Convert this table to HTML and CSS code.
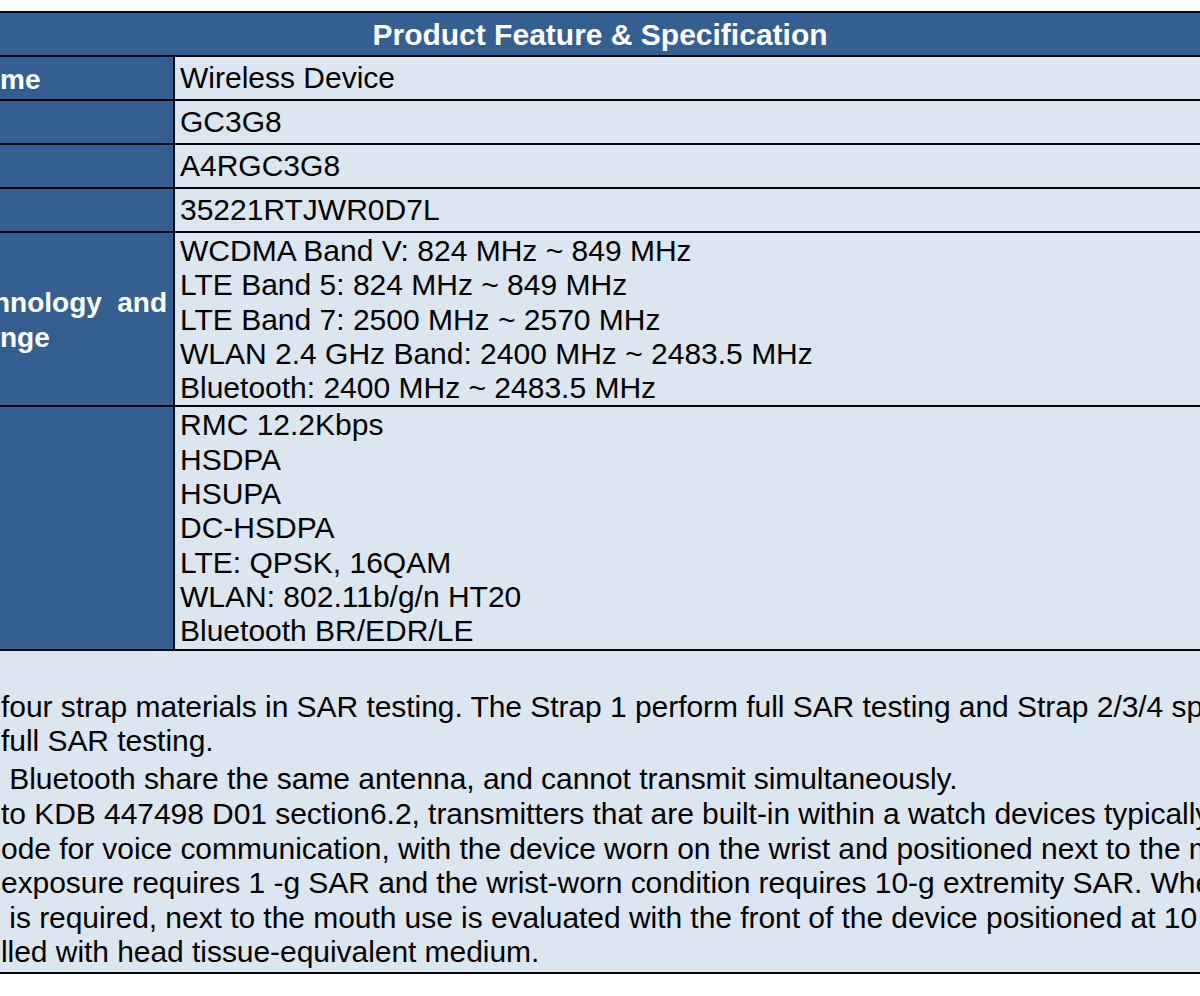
FILE: index.html
```html
<!DOCTYPE html>
<html lang="en">
<head>
<meta charset="utf-8">
<title>Product Feature &amp; Specification</title>
<link rel="stylesheet" href="styles.css">
</head>
<body>
<div class="sheet">
  <div class="title">Product Feature &amp; Specification</div>
  <div class="row">
    <div class="label"><span class="frag">me</span></div>
    <div class="value">Wireless Device</div>
  </div>
  <div class="row">
    <div class="label"></div>
    <div class="value">GC3G8</div>
  </div>
  <div class="row">
    <div class="label"></div>
    <div class="value">A4RGC3G8</div>
  </div>
  <div class="row">
    <div class="label"></div>
    <div class="value">35221RTJWR0D7L</div>
  </div>
  <div class="row">
    <div class="label">
      <div class="label-lines">
        <div class="just"><span class="clip-h">hnology</span><span>and</span></div>
        <span class="frag">nge</span>
      </div>
    </div>
    <div class="value multi">
      <span>WCDMA Band V: 824 MHz ~ 849 MHz</span>
      <span>LTE Band 5: 824 MHz ~ 849 MHz</span>
      <span>LTE Band 7: 2500 MHz ~ 2570 MHz</span>
      <span>WLAN 2.4 GHz Band: 2400 MHz ~ 2483.5 MHz</span>
      <span>Bluetooth: 2400 MHz ~ 2483.5 MHz</span>
    </div>
  </div>
  <div class="row">
    <div class="label"></div>
    <div class="value multi">
      <span>RMC 12.2Kbps</span>
      <span>HSDPA</span>
      <span>HSUPA</span>
      <span>DC-HSDPA</span>
      <span>LTE: QPSK, 16QAM</span>
      <span>WLAN: 802.11b/g/n HT20</span>
      <span>Bluetooth BR/EDR/LE</span>
    </div>
  </div>
  <div class="notes">
    <p class="note">four strap materials in SAR testing. The Strap 1 perform full SAR testing and Strap 2/3/4 spot check
full SAR testing.</p>
    <p class="note note-2"> Bluetooth share the same antenna, and cannot transmit simultaneously.</p>
    <p class="note note-3">to KDB 447498 D01 section6.2, transmitters that are built-in within a watch devices typically
ode for voice communication, with the device worn on the wrist and positioned next to the mouth
exposure requires 1 -g SAR and the wrist-worn condition requires 10-g extremity SAR. When
 is required, next to the mouth use is evaluated with the front of the device positioned at 10 mm
lled with head tissue-equivalent medium.</p>
  </div>
</div>
</body>
</html>
```

FILE: styles.css
```css
html, body {
  margin: 0;
  padding: 0;
  background: #ffffff;
  overflow: hidden;
}

body {
  width: 1200px;
  height: 996px;
  font-family: "Liberation Sans", Arial, sans-serif;
  font-size: 30px;
  line-height: 34.5px;
  color: #000000;
}

.sheet {
  margin-top: 11px;
  width: 1200px;
  border-top: 2px solid #05050f;
}

.title {
  height: 42px;
  line-height: 44px;
  background: #365f91;
  color: #ffffff;
  font-weight: bold;
  text-align: center;
  border-bottom: 2px solid #05050f;
  white-space: nowrap;
}

.row {
  display: flex;
  border-bottom: 2px solid #05050f;
  min-height: 42px;
}

.label {
  width: 175px;
  flex: none;
  background: #365f91;
  border-right: 2px solid #05050f;
  color: #ffffff;
  font-weight: bold;
  font-size: 28px;
  line-height: 35px;
  display: flex;
  align-items: center;
  overflow: hidden;
  white-space: nowrap;
  padding-top: 2px;
  box-sizing: border-box;
}

.label-lines {
  display: flex;
  flex-direction: column;
  width: 100%;
  padding-right: 6px;
  box-sizing: border-box;
}

.just {
  display: flex;
  justify-content: space-between;
}

.clip-h {
  margin-left: -7px;
}

.frag {
  display: block;
}

.value {
  flex: 1;
  background: #dce6f1;
  padding-left: 5px;
  padding-top: 1px;
  display: flex;
  flex-direction: column;
  justify-content: center;
  white-space: nowrap;
  overflow: hidden;
}

.value.multi {
  line-height: 34.3px;
}

.value.multi span {
  display: block;
}

.notes {
  background: #dce6f1;
  height: 323px;
  box-sizing: border-box;
  padding: 39px 0 0 1px;
  border-bottom: 2px solid #05050f;
  overflow: hidden;
  letter-spacing: -0.05px;
}

.note {
  margin: 0;
  white-space: pre;
}

.note-2 {
  margin-top: 3px;
}

.note-3 {
  margin-top: 1px;
}
```
